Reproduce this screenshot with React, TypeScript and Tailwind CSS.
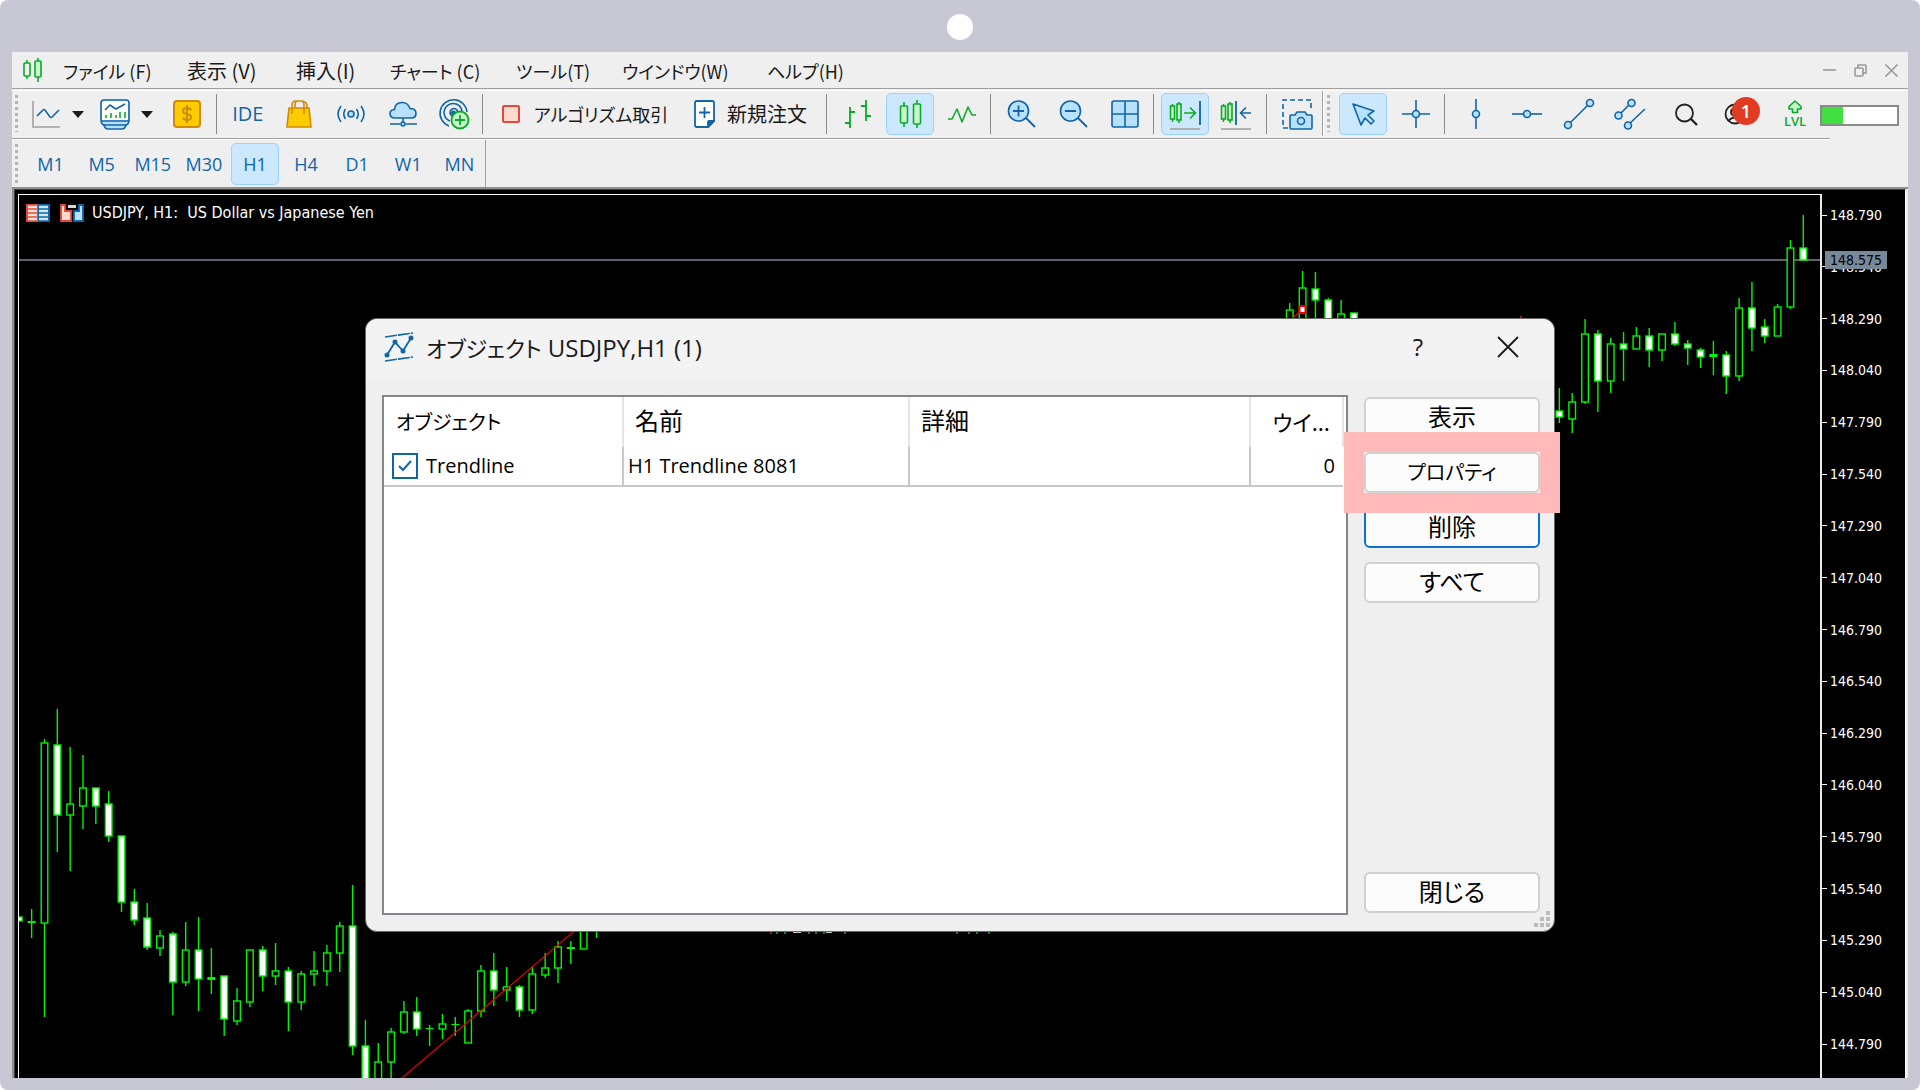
import React from "react";

const LATIN = "font-['Open_Sans','Noto_Sans_CJK_JP',sans-serif]";
const JP = "font-['Noto_Sans_CJK_JP',sans-serif] [font-feature-settings:'palt']";
const CHART = "font-['DejaVu_Sans_Condensed','Noto_Sans',sans-serif]";

const BLUE = "#0f65a8";
const SKY = "#b8e0ff";
const GREEN = "#0bab27";
const MINT = "#c9f5cd";

function Svg({ children, size = 32 }: { children: React.ReactNode; size?: number }) {
  return (
    <svg width={size} height={size} viewBox="0 0 32 32" fill="none" strokeWidth="1.6" aria-hidden="true" className="block shrink-0">
      {children}
    </svg>
  );
}

const icons = {
  lineChart: (
    <Svg>
      <path d="M3 3V29H30" stroke="#a0a0a0" />
      <path d="M7 18L13 12Q14 11 15 12L20 19Q21 20 22 19L29 12" stroke={BLUE} />
    </Svg>
  ),
  indicators: (
    <Svg>
      <path d="M2 5Q2 2 5 2H27Q30 2 30 5V22Q30 26 27 27Q26 31 23 31H9Q6 31 5 27Q2 26 2 22Z" fill={SKY} stroke={BLUE} />
      <path d="M3 5Q3 3 5 3H27Q29 3 29 5V22H3Z" fill="#fff" />
      <path d="M2 23H30M4 27H28" stroke={BLUE} />
      <path d="M6 12L11 7L17 11L26 6" stroke={BLUE} />
      <path d="M7 20V17M12 20V15M17 20V17M21 20V14M26 20V14" stroke={GREEN} />
    </Svg>
  ),
  dollar: (
    <Svg>
      <rect x="3" y="3" width="26" height="26" rx="3" fill="#fccc00" stroke="#cf8a0b" strokeWidth="2" />
      <path d="M20 12.500Q19 10 16 10Q12 10 12 13Q12 15.500 16 16Q20 16.500 20 19.500Q20 22 16 22Q12.500 22 12 19.500M16 7V25" stroke="#cf8a0b" strokeWidth="2" />
    </Svg>
  ),
  bag: (
    <Svg>
      <path d="M6 10H26L28 29H4Z" fill="#fccc00" stroke="#cf8a0b" />
      <path d="M9 16V7Q9 3 13 3H18Q21 3 21 7V16M12 10V7Q12 3 15 3M18 3Q23 3 24 7V10" stroke="#cf8a0b" />
    </Svg>
  ),
  signal: (
    <Svg>
      <circle cx="16" cy="16" r="3" fill={SKY} stroke={BLUE} />
      <path d="M10.500 11Q7 16 10.500 21M21.500 11Q25 16 21.500 21M6 8Q0 16 6 24M26 8Q32 16 26 24" stroke={BLUE} />
    </Svg>
  ),
  cloud: (
    <Svg>
      <path d="M8 20Q3 20 3 15.500Q3 12 7.500 11.500Q8 4.500 15 4.500Q21 4.500 23 10.500Q29 10.500 29 15.500Q29 20 24 20Z" fill={SKY} stroke={BLUE} />
      <path d="M16 20V24M3 26H13M19 26H30" stroke={BLUE} />
      <circle cx="16" cy="26" r="2" fill={SKY} stroke={BLUE} />
    </Svg>
  ),
  vps: (
    <Svg>
      <path d="M11 28A13.500 13.500 0 1 1 29 14M12 23A9 9 0 1 1 24 13M14 18A4 4 0 1 1 20 14" stroke={BLUE} />
      <circle cx="15.500" cy="15" r="2.500" fill={BLUE} />
      <circle cx="22" cy="22" r="8.500" fill={MINT} stroke={GREEN} strokeWidth="1.800" />
      <path d="M22 17V27M17 22H27" stroke={GREEN} strokeWidth="1.800" />
    </Svg>
  ),
  bars: (
    <Svg>
      <path d="M8 9V30M3 25H8M8 14H13M24 2V23M19 8H24M24 18H29" stroke={GREEN} strokeWidth="1.800" />
    </Svg>
  ),
  candles: (
    <Svg>
      <path d="M10 4V29M23 2V30" stroke={GREEN} />
      <rect x="6.500" y="8" width="7" height="17" rx="1" fill={MINT} stroke={GREEN} />
      <rect x="19.500" y="6" width="7" height="20" rx="1" fill={MINT} stroke={GREEN} />
    </Svg>
  ),
  zigzag: (
    <Svg>
      <path d="M2 21H6L11 11L16 24L22 9L26 17H30" stroke={GREEN} strokeLinejoin="round" />
    </Svg>
  ),
  zoomIn: (
    <Svg>
      <circle cx="12.500" cy="13" r="10" fill={SKY} stroke={BLUE} />
      <path d="M20 20L29 29M7 13H18M12.500 7.500V18.500" stroke={BLUE} strokeWidth="1.800" />
    </Svg>
  ),
  zoomOut: (
    <Svg>
      <circle cx="12.500" cy="13" r="10" fill={SKY} stroke={BLUE} />
      <path d="M20 20L29 29M7 13H18" stroke={BLUE} strokeWidth="1.800" />
    </Svg>
  ),
  tile: (
    <Svg>
      <rect x="3" y="3" width="26" height="26" rx="2" fill={SKY} stroke={BLUE} />
      <path d="M16 3V29M3 16H29" stroke={BLUE} />
    </Svg>
  ),
  autoScroll: (
    <Svg>
      <path d="M3.500 6V24M10 4V25" stroke={GREEN} />
      <rect x="1.500" y="8" width="4" height="13" fill={MINT} stroke={GREEN} />
      <rect x="8" y="6" width="4" height="16" fill={MINT} stroke={GREEN} />
      <path d="M15 15H26M21 9.500L26.500 15L21 20.500" stroke={GREEN} />
      <path d="M31 3V27" stroke={BLUE} strokeWidth="1.800" />
      <path d="M1 31H31" stroke="#a0a0a0" />
    </Svg>
  ),
  shift: (
    <Svg>
      <path d="M3.500 6V24M10 4V25" stroke={GREEN} />
      <rect x="1.500" y="8" width="4" height="13" fill={MINT} stroke={GREEN} />
      <rect x="8" y="6" width="4" height="16" fill={MINT} stroke={GREEN} />
      <path d="M16 3V27" stroke={BLUE} strokeWidth="1.800" />
      <path d="M31 15H21M26 9.500L20.500 15L26 20.500" stroke={BLUE} />
      <path d="M1 31H31" stroke="#a0a0a0" />
    </Svg>
  ),
  camera: (
    <Svg>
      <path d="M7 30H2V2H30V11" stroke={BLUE} strokeDasharray="5 3" />
      <path d="M9 18Q9 17 10 17H14L16 14H24L26 17H30Q31 17 31 18V30Q31 31 30 31H10Q9 31 9 30Z" fill={SKY} stroke={BLUE} />
      <circle cx="20" cy="23" r="3.500" stroke={BLUE} />
    </Svg>
  ),
  cursor: (
    <Svg>
      <path d="M6 6L27 13L21 17L27 23L24 26L18 20L14 27Z" fill={SKY} stroke={BLUE} strokeLinejoin="round" />
    </Svg>
  ),
  cross: (
    <Svg>
      <path d="M16 2V30M2 16H30" stroke={BLUE} />
      <circle cx="16" cy="16" r="3.500" fill={SKY} stroke={BLUE} />
    </Svg>
  ),
  vline: (
    <Svg>
      <path d="M16 1V31" stroke={BLUE} />
      <circle cx="16" cy="16" r="3.500" fill={SKY} stroke={BLUE} />
    </Svg>
  ),
  hline: (
    <Svg>
      <path d="M1 16H31" stroke={BLUE} />
      <circle cx="16" cy="16" r="3.500" fill={SKY} stroke={BLUE} />
    </Svg>
  ),
  trend: (
    <Svg>
      <path d="M5 27L27 5" stroke={BLUE} />
      <circle cx="5" cy="27" r="3.500" fill={SKY} stroke={BLUE} />
      <circle cx="27" cy="5" r="3.500" fill={SKY} stroke={BLUE} />
    </Svg>
  ),
  channel: (
    <Svg>
      <path d="M4 18L17 5M14 27L31 11" stroke={BLUE} />
      <circle cx="4.500" cy="17.500" r="3.500" fill={SKY} stroke={BLUE} />
      <circle cx="17.500" cy="5" r="3.500" fill={SKY} stroke={BLUE} />
      <circle cx="14" cy="27.500" r="3.500" fill={SKY} stroke={BLUE} />
    </Svg>
  ),
  search: (
    <Svg>
      <circle cx="14.500" cy="15" r="8.500" stroke="#222" strokeWidth="1.800" />
      <path d="M21 21L27 27" stroke="#222" strokeWidth="2.400" />
    </Svg>
  ),
  level: (
    <Svg>
      <path d="M16 4L22 9.500V12H18.500V15.500H13.500V12H10V9.500Z" fill={MINT} stroke={GREEN} strokeLinejoin="round" />
    </Svg>
  ),
};

function Tool({ label, icon, active = false }: { label: string; icon: React.ReactNode; active?: boolean }) {
  return (
    <div className="flex flex-1 items-center justify-center">
      <button
        type="button"
        aria-label={label}
        className={
          active
            ? "flex h-[42px] w-12 items-center justify-center rounded-[5px] border border-[#99d1ff] bg-[#cce8ff]"
            : "flex h-[42px] w-12 items-center justify-center rounded-[5px]"
        }
      >
        {icon}
      </button>
    </div>
  );
}

function Caret({ label }: { label: string }) {
  return (
    <button type="button" aria-label={label} className="flex w-3 items-center justify-center">
      <svg width="12" height="8" viewBox="0 0 12 8" aria-hidden="true">
        <path d="M0 1H12L6 8Z" fill="#1b1b1b" />
      </svg>
    </button>
  );
}

function Sep() {
  return (
    <div className="flex w-1 shrink-0 items-center justify-center">
      <div className="h-10 w-px bg-[#8a8a8a]" />
    </div>
  );
}

function Grip() {
  return <div className="ml-[3px] my-1 w-[3px] shrink-0 bg-[repeating-linear-gradient(to_bottom,#b4b4b4_0_3px,transparent_3px_6px)]" />;
}

const menu = [
  ["ファイル (F)", "w-[124px] text-[18px]"],
  ["表示 (V)", "w-[109px] text-[20px]"],
  ["挿入(I)", "w-[94px] text-[20px]"],
  ["チャート (C)", "w-[126px] text-[18px]"],
  ["ツール(T)", "w-[106px] text-[18px]"],
  ["ウインドウ(W)", "w-[145px] text-[18px]"],
  ["ヘルプ(H)", "w-[110px] text-[18px]"],
];

function MenuBar() {
  return (
    <div className="flex h-[37px] items-center border-b border-[#a0a0a0] pl-[9px] pr-[9px]">
      <svg width="24" height="26" viewBox="0 0 24 26" fill="none" strokeWidth="1.6" aria-hidden="true" className="mr-[18px] shrink-0">
        <path d="M6 3V22M17 1V25" stroke={GREEN} />
        <rect x="3" y="6" width="6" height="13" rx="1" fill="#efefef" stroke={GREEN} />
        <rect x="14" y="4" width="6" height="16" rx="1" fill={MINT} stroke={GREEN} />
      </svg>
      <div className="flex items-baseline pt-[2px]">
        {menu.map(([label, style]) => (
          <button key={label} type="button" className={`${JP} ${style} text-left leading-6 whitespace-nowrap text-[#1a1a1a]`}>
            {label}
          </button>
        ))}
      </div>
      <div className="ml-auto flex items-center gap-4 text-[#999]">
        <button type="button" aria-label="最小化">
          <svg width="15" height="15" viewBox="0 0 15 15" stroke="currentColor" strokeWidth="1.6"><path d="M1 7H14" /></svg>
        </button>
        <button type="button" aria-label="元に戻す">
          <svg width="15" height="15" viewBox="0 0 15 15" fill="none" stroke="currentColor" strokeWidth="1.6">
            <rect x="2" y="5" width="8" height="8" rx="1" /><path d="M5 5V2H12Q13 2 13 3V10H10" />
          </svg>
        </button>
        <button type="button" aria-label="閉じる">
          <svg width="15" height="15" viewBox="0 0 15 15" stroke="currentColor" strokeWidth="1.6"><path d="M1.500 1.500L13.500 13.500M13.500 1.500L1.500 13.500" /></svg>
        </button>
      </div>
    </div>
  );
}

function ToolBar() {
  return (
    <div className="mt-px flex h-12 border-t border-white pb-[2px]">
      <Grip />
      <div className="ml-[2px] flex w-[194px]">
        <div className="flex w-[52px]"><Tool label="チャート" icon={icons.lineChart} /></div>
        <Caret label="チャートの種類" />
        <div className="ml-[5px] flex w-[52px]"><Tool label="インディケータ" icon={icons.indicators} /></div>
        <Caret label="インディケータの種類" />
        <div className="ml-2 flex w-[51px]"><Tool label="銘柄" icon={icons.dollar} /></div>
      </div>
      <Sep />
      <div className="flex w-[262px] pl-1">
        <Tool label="IDE" icon={<span className={`${LATIN} text-[20px] leading-6 text-[#0f65a8]`}>IDE</span>} />
        <Tool label="マーケット" icon={icons.bag} />
        <Tool label="シグナル" icon={icons.signal} />
        <Tool label="クラウド" icon={icons.cloud} />
        <Tool label="VPS" icon={icons.vps} />
      </div>
      <Sep />
      <button type="button" className={`${JP} flex w-[194px] items-center gap-[14px] pl-[18px] text-[18px] leading-6 whitespace-nowrap text-[#1a1a1a]`}>
        <span className="size-[18px] shrink-0 rounded-[2px] border-2 border-[#e4473b] bg-[#ffd8ce]" />
        アルゴリズム取引
      </button>
      <button type="button" className={`${JP} flex w-[146px] items-center gap-3 pl-4 text-[20px] leading-6 whitespace-nowrap text-[#1a1a1a]`}>
        <svg width="21" height="28" viewBox="0 0 21 28" fill="none" strokeWidth="1.8" stroke={BLUE} aria-hidden="true" className="shrink-0">
          <path d="M3 1H18Q20 1 20 3V21L14 27H3Q1 27 1 25V3Q1 1 3 1Z" fill="#fff" />
          <path d="M14 27V22Q14 21 15 21H20Z" fill={BLUE} />
          <path d="M10.500 7V18M5 12.500H16" />
        </svg>
        新規注文
      </button>
      <Sep />
      <div className="flex w-40 pl-1">
        <Tool label="バーチャート" icon={icons.bars} />
        <Tool label="ローソク足" icon={icons.candles} active />
        <Tool label="ラインチャート" icon={icons.zigzag} />
      </div>
      <Sep />
      <div className="flex w-[159px] pl-1">
        <Tool label="ズームイン" icon={icons.zoomIn} />
        <Tool label="ズームアウト" icon={icons.zoomOut} />
        <Tool label="タイル表示" icon={icons.tile} />
      </div>
      <Sep />
      <div className="flex w-[109px] pl-1 pr-[2px]">
        <Tool label="自動スクロール" icon={icons.autoScroll} active />
        <Tool label="チャートシフト" icon={icons.shift} />
      </div>
      <Sep />
      <div className="flex w-[54px] pl-1">
        <Tool label="スクリーンショット" icon={icons.camera} />
      </div>
      <div className="w-[2px] border-r border-white bg-[#a0a0a0]" />
      <div className="flex w-[13px]"><Grip /></div>
      <div className="flex w-[105px]">
        <Tool label="カーソル" icon={icons.cursor} active />
        <Tool label="十字カーソル" icon={icons.cross} />
      </div>
      <Sep />
      <div className="flex w-[210px] pl-1">
        <Tool label="垂直線" icon={icons.vline} />
        <Tool label="水平線" icon={icons.hline} />
        <Tool label="トレンドライン" icon={icons.trend} />
        <Tool label="チャネル" icon={icons.channel} />
      </div>
      <div className="flex w-14 pl-1"><Tool label="検索" icon={icons.search} /></div>
      <button type="button" aria-label="通知 1" className="relative flex w-[58px] items-center pl-3">
        <svg width="22" height="22" viewBox="0 0 22 22" fill="none" stroke="#222" strokeWidth="1.8" aria-hidden="true">
          <circle cx="11" cy="11" r="9.500" /><circle cx="11" cy="9" r="4" /><path d="M4 18Q11 11 18 18" />
        </svg>
        <span className="absolute top-[6px] left-5 flex size-7 items-center justify-center rounded-full bg-[#e13c22] font-['Open_Sans',sans-serif] text-[18px] font-semibold text-white">1</span>
      </button>
      <button type="button" className={`${LATIN} relative flex w-[50px] flex-col items-center text-[13px] font-semibold text-[#0bab27]`}>
        <span className="mt-[6px]">{icons.level}</span>
        <span className="absolute top-[22px] leading-4">LVL</span>
      </button>
      <div role="progressbar" aria-valuenow={27} aria-label="接続状態" className="mt-[14px] h-[21px] w-[79px] border-2 border-[#8a8a8a] bg-white">
        <div className="h-full w-[21px] bg-[#41e041]" />
      </div>
    </div>
  );
}

const frames = ["M1", "M5", "M15", "M30", "H1", "H4", "D1", "W1", "MN"];

function TimeframeBar() {
  return (
    <div className="flex h-[47px]">
      <Grip />
      <div className="ml-[5px] flex w-[463px] items-center border-r border-[#a0a0a0] pt-px pl-[2px]">
        {frames.map((f) => (
          <div key={f} className="flex flex-1 justify-center">
            <button
              type="button"
              className={
                f === "H1"
                  ? `${LATIN} h-[42px] w-12 rounded-[5px] border border-[#99d1ff] bg-[#cce8ff] text-[18px] text-[#0f65a8]`
                  : `${LATIN} h-[42px] w-12 text-[18px] text-[#0f65a8]`
              }
            >
              {f}
            </button>
          </div>
        ))}
      </div>
    </div>
  );
}

// [slot, high, body top, body bottom, low, kind]; kind: f = filled, h = hollow, d = doji
type Candle = [number, number, number, number, number, "f" | "h" | "d"];
const candles: Candle[] = [
  [0, 917, 917, 921, 921, "f"], [1, 909, 921, 923, 938, "d"], [2, 739, 743, 923, 1017, "h"], [3, 709, 745, 815, 852, "f"],
  [4, 747, 804, 815, 871, "h"], [5, 755, 788, 806, 829, "h"], [6, 788, 788, 806, 824, "f"], [7, 791, 804, 836, 842, "f"],
  [8, 836, 836, 902, 912, "f"], [9, 889, 902, 920, 925, "f"], [10, 903, 918, 947, 950, "f"], [11, 930, 936, 948, 956, "h"],
  [12, 932, 934, 982, 1015, "f"], [13, 922, 950, 982, 986, "h"], [14, 917, 950, 979, 1011, "f"], [15, 948, 977, 980, 994, "d"],
  [16, 976, 976, 1019, 1036, "f"], [17, 988, 1001, 1021, 1025, "h"], [18, 950, 950, 1002, 1007, "h"], [19, 946, 950, 976, 991, "f"],
  [20, 943, 971, 976, 985, "h"], [21, 967, 971, 1002, 1031, "f"], [22, 971, 974, 1002, 1010, "h"], [23, 951, 971, 974, 986, "h"],
  [24, 945, 953, 971, 986, "h"], [25, 922, 926, 953, 972, "h"], [26, 885, 926, 1046, 1055, "f"], [27, 1020, 1046, 1090, 1090, "f"],
  [28, 1043, 1062, 1090, 1090, "h"], [29, 1028, 1032, 1062, 1090, "h"], [30, 1001, 1012, 1032, 1034, "h"], [31, 997, 1012, 1029, 1036, "f"],
  [32, 1025, 1028, 1029, 1046, "d"], [33, 1014, 1024, 1029, 1039, "h"], [34, 1017, 1024, 1025, 1036, "d"], [35, 1009, 1011, 1043, 1043, "h"],
  [36, 965, 971, 1011, 1017, "h"], [37, 953, 971, 990, 1006, "f"], [38, 967, 987, 990, 1001, "h"], [39, 985, 987, 1010, 1017, "f"],
  [40, 967, 974, 1010, 1014, "h"], [41, 953, 968, 975, 978, "h"], [42, 941, 947, 968, 983, "h"], [43, 941, 947, 949, 964, "d"],
  [44, 920, 925, 949, 949, "h"], [45, 915, 920, 921, 938, "d"],
  [99, 303, 310, 330, 330, "h"], [100, 271, 288, 330, 330, "h"], [101, 272, 289, 300, 330, "f"], [102, 298, 300, 330, 330, "f"],
  [103, 300, 314, 330, 330, "h"], [104, 313, 313, 330, 330, "f"],
  [120, 388, 411, 417, 423, "f"], [121, 393, 402, 419, 433, "h"], [122, 319, 334, 402, 404, "h"], [123, 330, 334, 381, 412, "f"],
  [124, 338, 344, 381, 393, "h"], [125, 332, 344, 349, 381, "f"], [126, 327, 336, 349, 349, "h"], [127, 328, 336, 350, 367, "f"],
  [128, 334, 334, 350, 361, "h"], [129, 322, 334, 344, 346, "f"], [130, 340, 344, 348, 365, "f"], [131, 348, 350, 357, 368, "f"],
  [132, 341, 354, 357, 375, "d"], [133, 351, 355, 376, 394, "f"], [134, 298, 308, 376, 381, "h"], [135, 282, 308, 328, 351, "f"],
  [136, 319, 327, 336, 343, "f"], [137, 304, 307, 336, 336, "h"], [138, 240, 248, 307, 309, "h"], [139, 215, 248, 260, 260, "f"],
];
const stubs = [777, 785, 809, 816, 824, 845, 957, 969, 977, 989];
const LIME = "#00f600";

function CandleChart() {
  return (
    <svg width="1802" height="883" viewBox="19 195 1802 883" strokeWidth="1.4" className="absolute top-0 left-0" role="img" aria-label="USDJPY H1">
      <path d="M19 260H1821" stroke="#778899" strokeWidth="1.600" />
      {candles.map(([i, hi, top, bot, lo, kind]) => {
        const x = 18.8 + 12.838 * i;
        return (
          <g key={i} stroke={LIME}>
            <path d={`M${x} ${hi}V${top}M${x} ${bot}V${lo}`} />
            {kind === "d" ? (
              <rect x={x - 4} y={top} width="8" height={bot - top} fill={LIME} stroke="none" />
            ) : (
              <rect x={x - 3.3} y={top} width="6.6" height={bot - top} fill={kind === "f" ? "#fff" : "#000"} />
            )}
          </g>
        );
      })}
      {stubs.map((x) => <path key={x} d={`M${x} 930V934`} stroke="#2fae2f" />)}
      <path d="M793 932H801M826 932H832" stroke="#c8c8c8" strokeWidth="2" />
      <path d="M771 930V934M1521 316V319" stroke="#d03030" />
      <path d="M402 1078L1302 310" stroke="#e60000" strokeWidth="1.200" />
      <rect x="1299.500" y="306" width="6" height="7" fill="#fff" stroke="#f00000" strokeWidth="2" />
    </svg>
  );
}

const prices = [
  "148.790", "148.540", "148.290", "148.040", "147.790", "147.540", "147.290", "147.040", "146.790",
  "146.540", "146.290", "146.040", "145.790", "145.540", "145.290", "145.040", "144.790",
];

function PriceAxis() {
  return (
    <div className={`${CHART} relative flex w-[85px] shrink-0 flex-col justify-between border-l-2 border-[#e8e8e8] pt-[11px] pb-6 text-[14px] leading-5 text-white`}>
      {prices.map((p) => (
        <div key={p} className="flex items-center gap-[3px]">
          <span className="h-px w-[5px] bg-white" />
          {p}
        </div>
      ))}
      <div className="absolute top-[57px] left-[3px] h-[18px] w-[62px] bg-[#778899] pl-[5px] leading-[18px] text-black">148.575</div>
    </div>
  );
}

function ChartWindow() {
  return (
    <div className="flex flex-1 border-t-2 border-l-2 border-[#8f8f8f] bg-[#efefef] pr-[2px]">
      <div className="flex flex-1 overflow-hidden border-t border-r border-l border-t-[#444] border-r-white border-l-[#444] bg-black pt-1 pl-[3px]">
        <div className="relative flex-1 overflow-hidden border-t border-l border-white">
          <CandleChart />
          <div className={`${CHART} relative flex items-center pt-2 pl-[7px] text-[16px] leading-5 whitespace-pre text-white`}>
            <svg width="24" height="18" viewBox="0 0 24 18" aria-hidden="true">
              <rect width="12" height="18" fill="#e4473b" /><rect x="12" width="12" height="18" fill={BLUE} />
              <path d="M2 3H11M2 7H11M2 11H11M2 15H11" stroke="#ffe2dc" strokeWidth="2.500" />
              <path d="M13 3H22M13 7H22M13 11H22M13 15H22" stroke="#cfe8ff" strokeWidth="2.500" />
            </svg>
            <svg width="24" height="18" viewBox="0 0 24 18" aria-hidden="true" className="mr-2 ml-[10px]">
              <path d="M1 1H5V7H11V17H1Z" fill="#ffd8ce" stroke="#e4473b" strokeWidth="1.800" />
              <path d="M23 1H19V7H14V17H23Z" fill={SKY} stroke={BLUE} strokeWidth="1.800" />
              <path d="M8 1H16V4H8Z" fill="#d8d8d8" />
            </svg>
            {"USDJPY, H1:  US Dollar vs Japanese Yen"}
          </div>
        </div>
        <PriceAxis />
      </div>
    </div>
  );
}

function DialogButton({ children, focused = false, small = false }: { children: React.ReactNode; focused?: boolean; small?: boolean }) {
  return (
    <button
      type="button"
      className={
        focused
          ? `${JP} flex h-[41px] w-full items-center justify-center rounded-md border-2 border-[#0a74cc] bg-[#fdfcfd] pb-1 text-[24px] leading-6 text-black`
          : `${JP} flex h-[41px] w-full items-center justify-center rounded-md border-2 border-[#d0d0d0] bg-[#fdfcfd] text-black ${small ? "pb-[2px] text-[20px] leading-6" : "pb-1 text-[24px] leading-6"}`
      }
    >
      {children}
    </button>
  );
}

function ObjectTable() {
  return (
    <div className="flex-1 border-2 border-[#828790] bg-white pr-[2px]">
      <table className="w-full table-fixed border-collapse text-left text-black">
        <colgroup>
          <col className="w-[239px]" /><col className="w-[286px]" /><col /><col className="w-[93px]" />
        </colgroup>
        <thead className={`${JP} text-[24px] leading-6`}>
          <tr className="h-[50px]">
            <th className="border-r-2 border-[#e5e5e5] pl-3 font-normal text-[20px]">オブジェクト</th>
            <th className="border-r-2 border-[#e5e5e5] pb-1 pl-[11px] font-normal">名前</th>
            <th className="border-r-2 border-[#e5e5e5] pb-1 pl-[11px] font-normal">詳細</th>
            <th className="border-r-2 border-[#e5e5e5] pr-3 pb-[2px] text-right font-normal text-[22px]">ウイ...</th>
          </tr>
        </thead>
        <tbody className={`${LATIN} text-[20px] leading-6`}>
          <tr className="h-[39px] border-b-2 border-[#c8c8c8]">
            <td className="border-r-2 border-[#c8c8c8] pl-2">
              <label className="flex items-center gap-2">
                <span className="relative flex size-[26px]">
                  <input type="checkbox" defaultChecked className="size-[26px] appearance-none border-2 border-[#0f65a8] bg-white" />
                  <svg width="26" height="26" viewBox="0 0 26 26" fill="none" stroke={BLUE} strokeWidth="2" className="pointer-events-none absolute inset-0">
                    <path d="M7 13L11 17L19 8" />
                  </svg>
                </span>
                Trendline
              </label>
            </td>
            <td className="border-r-2 border-[#c8c8c8] pl-1">H1 Trendline 8081</td>
            <td className="border-r-2 border-[#c8c8c8]" />
            <td className="pr-2 text-right">0</td>
          </tr>
        </tbody>
      </table>
    </div>
  );
}

function ObjectDialog() {
  return (
    <div role="dialog" aria-label="オブジェクト USDJPY,H1 (1)" className="absolute top-[266px] left-1/2 flex h-[614px] w-[1190px] -translate-x-1/2 flex-col rounded-xl border border-[#666] bg-[#efefef]">
      <div className="flex h-[60px] shrink-0 items-center rounded-t-xl bg-[#f3f3f3] pr-[34px] pb-1 pl-[18px] text-[#1a1a1a]">
        <svg width="30" height="30" viewBox="0 0 30 30" fill="none" stroke={BLUE} aria-hidden="true">
          <path d="M1 5L29 1M1 29L29 25" strokeWidth="1.600" strokeDasharray="12 1" />
          <path d="M3 23L11 10L19 19L27 6" strokeWidth="1.800" />
          <path d="M3 23h0M11 10h0M19 19h0M27 6h0" strokeWidth="5" strokeLinecap="round" />
        </svg>
        <h2 className="ml-3 flex items-baseline gap-[6px] whitespace-nowrap">
          <span className={`${JP} text-[22px] leading-8`}>オブジェクト</span>
          <span className={`${LATIN} text-[24px] leading-8`}>USDJPY,H1 (1)</span>
        </h2>
        <button type="button" aria-label="ヘルプ" className={`${LATIN} ml-auto w-6 text-[24px] leading-8`}>?</button>
        <button type="button" aria-label="閉じる" className="ml-[66px] flex w-6 justify-center">
          <svg width="22" height="22" viewBox="0 0 22 22" stroke="#1a1a1a" strokeWidth="1.8"><path d="M1 1L21 21M21 1L1 21" /></svg>
        </button>
      </div>
      <div className="flex flex-1 gap-4 pt-4 pr-[14px] pb-4 pl-4">
        <ObjectTable />
        <div className="flex w-[176px] shrink-0 flex-col gap-[14px] pt-[2px]">
          <DialogButton>表示</DialogButton>
          <div className="relative z-10 bg-[#efefef]">
            <DialogButton small>プロパティ</DialogButton>
            <div className="pointer-events-none absolute -inset-5 border-20 border-[#ffb9b9]" />
          </div>
          <DialogButton focused>削除</DialogButton>
          <DialogButton>すべて</DialogButton>
          <div className="mt-auto pb-[2px]"><DialogButton>閉じる</DialogButton></div>
        </div>
      </div>
      <svg width="18" height="18" viewBox="0 0 18 18" fill="#bcbcbc" aria-hidden="true" className="absolute right-[3px] bottom-[3px]">
        <path d="M13 1h4v4h-4zM7 7h4v4H7zM13 7h4v4h-4zM1 13h4v4H1zM7 13h4v4H7zM13 13h4v4h-4z" />
      </svg>
    </div>
  );
}

export default function App() {
  return (
    <div className="min-h-screen bg-white">
      <div className="flex min-h-screen flex-col rounded-lg bg-[#c8c7d4] px-3 pb-3">
        <div className="flex h-[52px] shrink-0 justify-center pt-[14px]">
          <div className="size-[26px] rounded-full bg-white" />
        </div>
        <div className="relative flex flex-1 flex-col overflow-hidden bg-[#efefef]">
          <MenuBar />
          <ToolBar />
          <div className="mr-[78px] h-[2px] border-t border-[#a0a0a0] bg-white" />
          <TimeframeBar />
          <ChartWindow />
          <ObjectDialog />
        </div>
      </div>
    </div>
  );
}
